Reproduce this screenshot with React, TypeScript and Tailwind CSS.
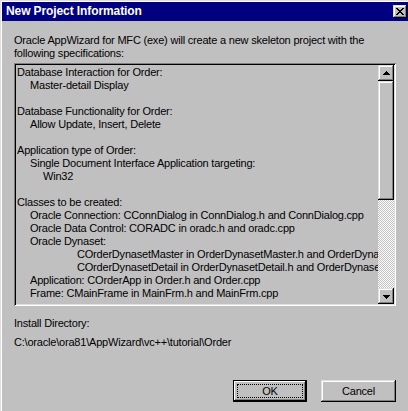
import React from "react"

const lines = [
  { text: "Database Interaction for Order:", pad: "pl-0" },
  { text: "Master-detail Display", pad: "pl-[13px]" },
  { text: "", pad: "pl-0" },
  { text: "Database Functionality for Order:", pad: "pl-0" },
  { text: "Allow Update, Insert, Delete", pad: "pl-[13px]" },
  { text: "", pad: "pl-0" },
  { text: "Application type of Order:", pad: "pl-0" },
  { text: "Single Document Interface Application targeting:", pad: "pl-[13px]" },
  { text: "Win32", pad: "pl-[26px]" },
  { text: "", pad: "pl-0" },
  { text: "Classes to be created:", pad: "pl-0" },
  { text: "Oracle Connection: CConnDialog in ConnDialog.h and ConnDialog.cpp", pad: "pl-[13px]" },
  { text: "Oracle Data Control: CORADC in oradc.h and oradc.cpp", pad: "pl-[13px]" },
  { text: "Oracle Dynaset:", pad: "pl-[13px]" },
  { text: "COrderDynasetMaster in OrderDynasetMaster.h and OrderDynasetMaster.cpp", pad: "pl-[60px]" },
  { text: "COrderDynasetDetail in OrderDynasetDetail.h and OrderDynasetDetail.cpp", pad: "pl-[60px]" },
  { text: "Application: COrderApp in Order.h and Order.cpp", pad: "pl-[13px]" },
  { text: "Frame: CMainFrame in MainFrm.h and MainFrm.cpp", pad: "pl-[13px]" }
]

const raised =
  "bg-[#c0c0c0] shadow-[inset_-1px_-1px_#000,inset_1px_1px_#dfdfdf,inset_-2px_-2px_#808080,inset_2px_2px_#fff]"

const Arrow = ({ down }: { down?: boolean }) => (
  <svg width="7" height="4" viewBox="0 0 7 4" className={down ? "rotate-180" : ""}>
    <path d="M3 0h1v1h1v1h1v1h1v1H0V3h1V2h1V1h1z" fill="#000" />
  </svg>
)

const App = () => {
  return (
    <div className="w-[408px] h-[411px] overflow-hidden bg-[#c0c0c0] border-l border-t border-[#dfdfdf] font-['Liberation_Sans',Arial,sans-serif] text-[11px] leading-[13px] tracking-[-0.2px] text-black">
      <div className="h-full border-l border-t border-white flex flex-col">
        <header className="h-[19px] bg-[#000080] flex items-center justify-between pl-[4px] pr-[1px]">
          <span className="text-white font-bold text-[12px] tracking-[-0.1px]">New Project Information</span>
          <button className={`w-[14px] h-[13px] flex items-center justify-center mb-[1px] ${raised}`}>
            <svg width="8" height="7" viewBox="0 0 8 7">
              <path d="M0 0h2v1h1v1h2V1h1V0h2v1H7v1H6v1H5v1h1v1h1v1h1v1H6V6H5V5H3v1H2v1H0V6h1V5h1V4h1V3H2V2H1V1H0z" fill="#000" />
            </svg>
          </button>
        </header>

        <main className="flex flex-col pl-[12px] pr-[10px]">
          <p className="mt-[13px]">
            Oracle AppWizard for MFC (exe) will create a new skeleton project with the
            <br />
            following specifications:
          </p>

          <section className="mt-[3px] h-[243px] w-[382px] flex shadow-[inset_1px_1px_#808080,inset_-1px_-1px_#fff,inset_2px_2px_#000,inset_-2px_-2px_#dfdfdf] p-[2px]">
            <div className="flex-1 overflow-hidden pl-[1px] pt-[1px] whitespace-nowrap">
              {lines.map((item, index) => (
                <div key={index} className={`h-[13px] ${item.pad}`}>
                  {item.text}
                </div>
              ))}
            </div>
            <div className="w-[16px] flex flex-col">
              <div className={`h-[16px] flex items-center justify-center ${raised}`}>
                <Arrow />
              </div>
              <div className={`h-[119px] ${raised}`} />
              <div className="flex-1 bg-[repeating-conic-gradient(#ffffff_0%_25%,#c0c0c0_0%_50%)] bg-[length:2px_2px]" />
              <div className={`h-[16px] flex items-center justify-center pt-[1px] ${raised}`}>
                <Arrow down />
              </div>
            </div>
          </section>

          <p className="mt-[11px]">Install Directory:</p>
          <p className="mt-[6px]">C:\oracle\ora81\AppWizard\vc++\tutorial\Order</p>

          <footer className="mt-[31px] w-[382px] flex justify-end gap-[14px]">
            <button className="w-[74px] h-[22px] border border-black p-0">
              <div className="h-full bg-[#c0c0c0] shadow-[inset_-1px_-1px_#000,inset_1px_1px_#fff,inset_-2px_-2px_#808080] p-[3px]">
                <div className="h-full border border-dotted border-black flex items-center justify-center">OK</div>
              </div>
            </button>
            <button className={`w-[75px] h-[22px] flex items-center justify-center ${raised}`}>Cancel</button>
          </footer>
        </main>
      </div>
    </div>
  )
}

export default App
